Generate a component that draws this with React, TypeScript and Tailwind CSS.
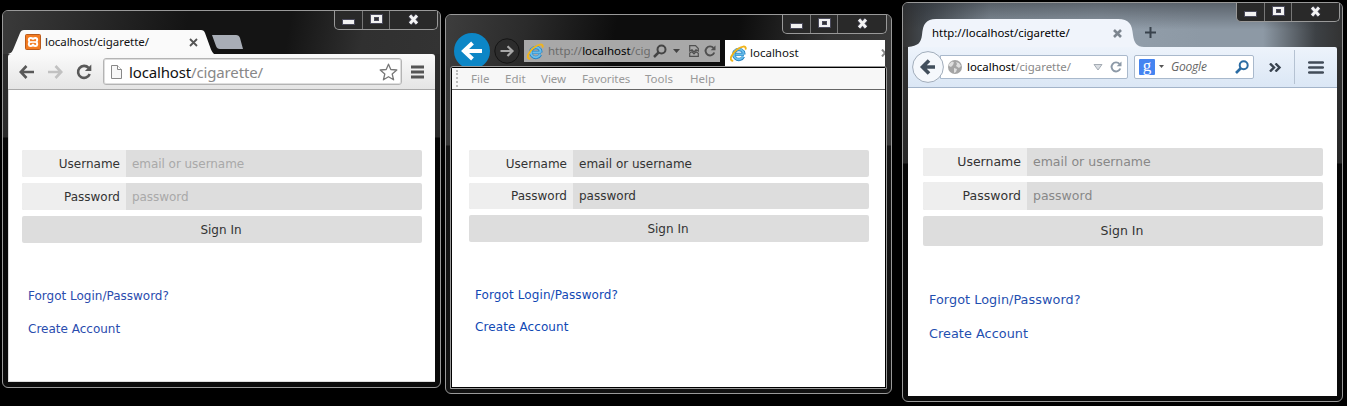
import React from "react";

type FormProps = {
  className: string;
  rowHeights: [string, string, string];
  placeholder: string;
  text: string;
  labelText: string;
  links: string;
  linkText: string;
};

function LoginForm({ className, rowHeights, placeholder, text, labelText, links, linkText }: FormProps) {
  const rows = [
    { label: "Username", hint: "email or username", type: "text" },
    { label: "Password", hint: "password", type: "text" },
  ];
  return (
    <form className={`flex flex-col font-['DejaVu_Sans',sans-serif] text-[#333] ${className}`}>
      <div className="flex w-[400px] flex-col gap-[6px]">
        {rows.map((r, i) => (
          <div key={r.label} className={`flex overflow-hidden rounded-[2px] bg-[#ddd] ${rowHeights[i]}`}>
            <label className={`flex w-[104px] items-center justify-end bg-[#eee] pr-[6px] ${labelText}`}>{r.label}</label>
            <input
              type={r.type}
              placeholder={r.hint}
              className={`min-w-0 flex-1 bg-transparent pl-[6px] outline-none ${text} ${placeholder}`}
            />
          </div>
        ))}
        <button type="button" className={`rounded-[2px] bg-[#ddd] pr-[2px] ${rowHeights[2]} ${labelText}`}>
          Sign In
        </button>
      </div>
      <div className={`flex flex-col items-start pl-[6px] ${links}`}>
        <a className={linkText}>Forgot Login/Password?</a>
        <a className={linkText}>Create Account</a>
      </div>
    </form>
  );
}

function CaptionButtons({ className }: { className: string }) {
  return (
    <div className={`absolute flex h-[19px] rounded-b-[5px] border border-t-0 border-[#999] bg-[#292929] ${className}`}>
      <div className="flex w-[28px] items-center justify-center border-r border-[#777]">
        <svg width="13" height="7" viewBox="0 0 13 7" className="mt-[5px]">
          <rect x=".5" y=".5" width="12" height="5" fill="#f2f2f2" stroke="#4b4b5c" />
        </svg>
      </div>
      <div className="flex w-[27px] items-center justify-center border-r border-[#777]">
        <svg width="13" height="11" viewBox="0 0 13 11" className="-mt-px">
          <rect x=".5" y=".5" width="12" height="9" fill="#f2f2f2" stroke="#4b4b5c" />
          <rect x="4.5" y="3.5" width="4" height="3" fill="#333" stroke="#4b4b5c" />
        </svg>
      </div>
      <div className="flex flex-1 items-center justify-center">
        <svg width="13" height="11" viewBox="0 0 13 11" className="-mt-px">
          <path d="M3 1.5 10 9.5M10 1.5 3 9.5" stroke="#50505f" strokeWidth="4.4" />
          <path d="M3 1.5 10 9.5M10 1.5 3 9.5" stroke="#f4f4f4" strokeWidth="2.8" />
        </svg>
      </div>
    </div>
  );
}

function PageIcon() {
  return (
    <svg width="13" height="16" viewBox="0 0 13 16" className="shrink-0">
      <path d="M1.500 1.500h6l4 4v9h-10z" fill="#f7f7f7" stroke="#888" />
      <path d="M7.500 1.500v4h4" fill="#fff" stroke="#888" />
    </svg>
  );
}

function ReloadIcon({ size, color, className = "" }: { size: number; color: string; className?: string }) {
  return (
    <svg width={size} height={size} viewBox="0 0 16 16" className={`shrink-0 ${className}`}>
      <path d="M12.6 3.9A6 6 0 1 0 13.7 10" fill="none" stroke={color} strokeWidth="2.6" />
      <path d="M15.3 0.6V7H8.9z" fill={color} />
    </svg>
  );
}

function IeLogo() {
  return (
    <svg width="17" height="17" viewBox="0 0 17 17" className="shrink-0">
      <path d="M14 9.4H5.4M13.4 11.6A5 5 0 1 1 13.8 8.8v.600" fill="none" stroke="#2583c3" strokeWidth="3.4" />
      <path d="M13.8 9.4H5.4M13.2 11.600A5 5 0 1 1 13.8 8.8" fill="none" stroke="#69bdeb" strokeWidth="2" />
      <path d="M2.4 15.8C-1.2 15 1.7 8.8 7 4.6 11.6 1 16.2.4 15.7 3.8" fill="none" stroke="#f0b41c" strokeWidth="1.9" strokeLinecap="round" />
    </svg>
  );
}

function XamppIcon() {
  return (
    <svg width="16" height="16" viewBox="0 0 16 16" className="shrink-0">
      <rect x=".5" y=".5" width="15" height="15" rx="1" fill="#f37b21" stroke="#b95b1c" />
      <path
        d="M8 5.500C7.500 3.300 3.800 3.300 3.800 5.900c0 1 .500 1.600 1.200 2.100-1.900 1-1.600 4.100.600 4.100C7.200 12.100 8 11 8 9.800c0 1.200.800 2.300 2.400 2.300 2.200 0 2.500-3.100.600-4.100.700-.500 1.200-1.100 1.200-2.100C12.200 3.300 8.500 3.300 8 5.500z"
        fill="none"
        stroke="#fff"
        strokeWidth="2"
      />
      <path d="M6 8h4" stroke="#fff" strokeWidth="1.600" />
    </svg>
  );
}

function ChromeWindow() {
  return (
    <section className="absolute left-[2px] top-[10px] flex h-[378px] w-[439px] flex-col rounded-[6px] border border-[#999] bg-[linear-gradient(180deg,#303030_0px,#292929_126px,#050505_127px,#0b0b0b_100%)] px-[5px] pb-[5px]">
      <CaptionButtons className="right-[2px] top-0 w-[104px]" />
      <header className="-mx-[5px] flex h-[43px] items-end rounded-t-[5px] bg-[linear-gradient(100deg,#3a3a3a_0%,#272727_22%,#141414_42%,#141414_65%,#303030_82%,#333_100%)] pl-[5px]">
        <div className="relative flex h-[24px] w-[206px] items-center pl-[17px]">
          <svg width="206" height="24" viewBox="0 0 206 24" className="absolute left-0 top-0">
            <path d="M0 24C4 23 4.500 21 6 17.500L12 3Q13 0 16 0H193Q196 0 197 3L203 19.500Q204.500 23 206 24z" fill="#fafafa" />
          </svg>
          <div className="relative flex w-full items-center">
            <XamppIcon />
            <span className="ml-[4px] w-[144px] whitespace-nowrap font-['Noto_Sans',sans-serif] text-[11.5px] leading-[16px] tracking-[-0.05px] text-[#111]">
              localhost/cigarette/
            </span>
            <svg width="9" height="9" viewBox="0 0 9 9" className="mt-px">
              <path d="M1 1l7 7M8 1 1 8" stroke="#555" strokeWidth="1.8" />
            </svg>
          </div>
        </div>
        <svg width="32" height="14" viewBox="0 0 32 14" className="mb-[5px] ml-[-3px]">
          <path d="M1 0H25Q28 0 29 3L32 14H9Q6 14 5 11z" fill="#a8adb6" />
        </svg>
      </header>
      <div className="flex h-[36px] items-center rounded-t-[3px] border-b border-[#aaa] bg-gradient-to-b from-[#fafafa] to-[#e5e5e5] pl-[11px]">
        <svg width="15" height="14" viewBox="0 0 15 14">
          <path d="M7.500 1 1.800 7l5.700 6M2 7h13" fill="none" stroke="#595959" strokeWidth="2.600" />
        </svg>
        <svg width="15" height="14" viewBox="0 0 15 14" className="ml-[14px]">
          <path d="M7.500 1l5.700 6-5.700 6M13 7H0" fill="none" stroke="#c1c1c1" strokeWidth="2.600" />
        </svg>
        <ReloadIcon size={16} color="#595959" className="ml-[13px]" />
        <div className="ml-[11px] flex h-[27px] w-[299px] items-center rounded-[3px] border border-[#b4b4b4] bg-white pl-[6px] shadow-[inset_0_0_0_1px_#dedede]">
          <PageIcon />
          <span className="ml-[6px] flex-1 whitespace-nowrap font-['Noto_Sans',sans-serif] text-[15px] leading-[20px] tracking-[-0.15px] text-[#111]">
            localhost<span className="text-[#888]">/cigarette/</span>
          </span>
          <svg width="19" height="18" viewBox="0 0 19 18" className="mr-[3px]">
            <path d="M9.500 1.200 11.800 6.500 17.800 7 13.200 11 14.600 16.800 9.500 13.700 4.400 16.800 5.800 11 1.200 7 7.200 6.500z" fill="#fff" stroke="#777" strokeWidth="1.300" strokeLinejoin="round" />
          </svg>
        </div>
        <svg width="13" height="14" viewBox="0 0 13 14" className="ml-[9px]">
          <path d="M0 2h13M0 7h13M0 12h13" stroke="#555" strokeWidth="2.800" />
        </svg>
      </div>
      <main className="flex-1 border-b border-l border-[#ddd] bg-white">
        <LoginForm
          className="pl-[13px] pt-[60px]"
          rowHeights={["h-[27px]", "h-[27px]", "h-[27px]"]}
          placeholder="placeholder:text-[#a9a9a9]"
          text="text-[12px] tracking-[-0.05px]"
          labelText="text-[12px]"
          links="gap-[17px] pt-[45px] text-[#2a4cae]"
          linkText="text-[12px] leading-[16px]"
        />
      </main>
    </section>
  );
}

function IeWindow() {
  return (
    <section className="absolute left-[445px] top-[14px] flex h-[380px] w-[447px] flex-col rounded-[6px] border border-[#999] bg-[linear-gradient(180deg,#3a3a3a_0px,#383838_130px,#151515_131px,#111_100%)] px-[4px] pb-[4px]">
      <CaptionButtons className="right-[4px] top-0 w-[105px]" />
      <header className="-mx-[4px] flex h-[51px] items-start overflow-hidden rounded-t-[5px] bg-[linear-gradient(100deg,#3d3d3d_0%,#2b2b2b_18%,#0d0d0d_38%,#0d0d0d_65%,#333_85%,#3a3a3a_100%)] pl-[8px]">
        <svg width="37" height="37" viewBox="0 0 37 37" className="mt-[18px]">
          <circle cx="18" cy="18" r="18" fill="#0c86c6" />
          <path d="M18.500 10 10 18l8.500 8M10.500 18H28" fill="none" stroke="#fff" strokeWidth="4" />
        </svg>
        <svg width="27" height="27" viewBox="0 0 27 27" className="ml-[2px] mt-[23px]">
          <circle cx="14" cy="13" r="12.200" fill="#2c2c2c" stroke="#151515" />
          <path d="M14.500 8.200 19.500 13l-5 5M19 13H7.500" fill="none" stroke="#a8a8a8" strokeWidth="2.200" />
        </svg>
        <div className="ml-[4px] mt-[25px] flex h-[22px] w-[196px] items-center bg-[#a8a8a8] pl-[3px]">
          <IeLogo />
          <span className="ml-[4px] w-[102px] overflow-hidden whitespace-nowrap font-['Noto_Sans',sans-serif] text-[11.500px] leading-[16px] text-[#6b6b6b]">
            http://<span className="text-black">localhost</span>/cig
          </span>
          <svg width="15" height="15" viewBox="0 0 15 15" className="ml-[3px]">
            <circle cx="8.500" cy="5.500" r="4" fill="none" stroke="#444" strokeWidth="2" />
            <path d="M5.500 8.500 1 13" stroke="#444" strokeWidth="2.500" />
          </svg>
          <svg width="7" height="4" viewBox="0 0 7 4" className="ml-[5px]">
            <path d="M0 0h7L3.500 4z" fill="#444" />
          </svg>
          <svg width="10" height="12" viewBox="0 0 10 12" className="ml-[9px]">
            <path d="M.700 6V.700H6.500l2.800 2.800V6L7 4.800 5 6.800 3 4.800zM.700 8 3 6.800l2 2 2-2 2.300 1.500v3H.700z" fill="none" stroke="#505050" strokeWidth="1.200" />
          </svg>
          <ReloadIcon size={12} color="#505050" className="ml-[5px]" />
        </div>
        <div className="ml-[5px] mt-[25px] flex h-[26px] w-[160px] items-center overflow-hidden bg-white pl-[5px]">
          <IeLogo />
          <span className="ml-[3px] w-[131px] shrink-0 whitespace-nowrap font-['Noto_Sans',sans-serif] text-[11.500px] leading-[16px] text-[#111]">localhost</span>
          <svg width="8" height="8" viewBox="0 0 8 8" className="shrink-0">
            <path d="M1 .500l6 7M7 .500l-6 7" stroke="#888" strokeWidth="2" />
          </svg>
        </div>
      </header>
      <div className="flex flex-1 flex-col rounded-t-[3px] border border-[#999] bg-black p-px">
        <nav className="flex h-[22px] shrink-0 items-center border-b border-[#666] bg-[#f7f7f7] pl-[4px] font-['Noto_Sans',sans-serif] text-[11.500px] text-[#999]">
          <div className="mr-[13px] h-[17px] border-l-2 border-dotted border-[#bbb]" />
          <span className="w-[34px]">File</span>
          <span className="w-[36px]">Edit</span>
          <span className="w-[41px]">View</span>
          <span className="w-[63px] tracking-[-0.1px]">Favorites</span>
          <span className="w-[45px]">Tools</span>
          <span>Help</span>
        </nav>
        <main className="flex-1 bg-white">
          <LoginForm
            className="pl-[17px] pt-[60px]"
            rowHeights={["h-[27px]", "h-[26px]", "h-[27px]"]}
            placeholder="placeholder:text-[#333]"
            text="text-[12px]"
            labelText="text-[12px]"
            links="gap-[16px] pt-[45px] text-[#1148b4]"
            linkText="text-[12px] leading-[16px] tracking-[0.1px]"
          />
        </main>
      </div>
    </section>
  );
}

function FirefoxWindow() {
  return (
    <section className="absolute left-[902px] top-[2px] flex h-[400px] w-[441px] flex-col rounded-[6px] border border-[#999] bg-[linear-gradient(180deg,#333_0px,#282828_160px,#070707_161px,#0b0b0b_100%)] px-[5px] pb-[5px]">
      <CaptionButtons className="right-[2px] top-0 w-[104px]" />
      <header className="-mx-[5px] flex h-[44px] items-end rounded-t-[5px] bg-[linear-gradient(180deg,rgba(40,44,50,0.5)_0%,rgba(40,44,50,0)_60%),linear-gradient(90deg,#333_0%,#444a50_5%,#88949f_20%,#939fab_45%,#8d99a5_68%,#8d99a5_82%,#3d4145_94%,#333_100%)] pl-[5px]">
        <div className="relative flex h-[28px] w-[236px] items-center pl-[24px]">
          <svg width="236" height="28" viewBox="0 0 236 28" className="absolute left-0 top-0">
            <path d="M0 28C10 27 13 24 14 16 15 5 18 0 28 0H210C221 0 224 5 225 16 226 24 229 28 236 28z" fill="#f0f4fb" />
          </svg>
          <span className="relative w-[181px] whitespace-nowrap font-['Noto_Sans',sans-serif] text-[11.400px] leading-[16px] text-black">
            http://localhost/cigarette/
          </span>
          <svg width="9" height="9" viewBox="0 0 9 9" className="relative">
            <path d="M1 1l7 7M8 1 1 8" stroke="#7c858f" strokeWidth="2.600" />
          </svg>
        </div>
        <svg width="11" height="11" viewBox="0 0 11 11" className="mb-[9px] ml-[1px]">
          <path d="M5.500 0v11M0 5.500h11" stroke="#39424c" strokeWidth="2" />
        </svg>
      </header>
      <div className="flex h-[41px] shrink-0 items-center rounded-tr-[2px] border-b border-[#a3b4c9] bg-gradient-to-b from-[#edf3fb] to-[#dbe7f5] pl-[4px]">
        <svg width="32" height="32" viewBox="0 0 32 32" className="relative shrink-0">
          <circle cx="16" cy="16" r="15.400" fill="#f5f8fc" stroke="#a0acba" />
          <path d="M17 9.500 10.500 16l6.500 6.500M11 16h12" fill="none" stroke="#424f5c" strokeWidth="3.600" />
        </svg>
        <div className="-ml-[4px] flex h-[24px] w-[188px] items-center rounded-r-[2px] border border-[#a9b9cc] bg-white pl-[7px]">
          <svg width="14" height="14" viewBox="0 0 14 14" className="shrink-0">
            <circle cx="7" cy="7" r="7" fill="#a4a4a4" />
            <path d="M1 4 4 1.500l2 1-1 2.500L3 7 1 6zM8 2l3 1 2 3-2 2-3-2 1-2zM6 8l3 1-1 3-2 1z" fill="#dedede" />
          </svg>
          <span className="ml-[5px] w-[126px] whitespace-nowrap font-['Noto_Sans',sans-serif] text-[11.400px] leading-[16px] text-black">
            localhost<span className="text-[#888]">/cigarette/</span>
          </span>
          <svg width="10" height="7" viewBox="0 0 10 7" className="shrink-0">
            <path d="M1 .500h8L5 6z" fill="#d9dde2" stroke="#a5acb4" />
          </svg>
          <ReloadIcon size={12} color="#8c99a7" className="ml-[7px]" />
        </div>
        <div className="ml-[6px] flex h-[24px] w-[120px] shrink-0 items-center rounded-[2px] border border-[#a9b9cc] bg-white pl-[4px]">
          <span className="flex h-[16px] w-[16px] shrink-0 items-center justify-center rounded-[1px] bg-[#4584f1] pb-[3px] font-['Liberation_Serif',serif] text-[17px] leading-[13px] text-white">
            g
          </span>
          <svg width="5" height="4" viewBox="0 0 5 4" className="ml-[4px]">
            <path d="M0 0h5L2.500 3z" fill="#555" />
          </svg>
          <span className="ml-[7px] w-[64px] font-['Open_Sans',sans-serif] text-[12px] italic leading-[16px] tracking-[-0.200px] text-[#666]">Google</span>
          <svg width="14" height="14" viewBox="0 0 14 14" className="shrink-0">
            <circle cx="8.700" cy="5.200" r="4" fill="none" stroke="#2b6ca3" strokeWidth="2" />
            <path d="M6 8 1 13" stroke="#2b6ca3" strokeWidth="2.600" />
          </svg>
        </div>
        <svg width="13" height="9" viewBox="0 0 13 9" className="ml-[15px] shrink-0">
          <path d="M1 .500 5 4.500l-4 4M6.500 .500l4 4-4 4" fill="none" stroke="#39434f" strokeWidth="2.400" />
        </svg>
        <div className="ml-[12px] h-[34px] w-px bg-[#b5c2d2]" />
        <svg width="16" height="13" viewBox="0 0 16 13" className="ml-[13px] shrink-0">
          <path d="M1.200 1.500h13.600M1.200 6.500h13.600M1.200 11.500h13.600" stroke="#424c58" strokeWidth="2.600" strokeLinecap="round" />
        </svg>
      </div>
      <main className="flex-1 bg-white">
        <LoginForm
          className="pl-[15px] pt-[60px]"
          rowHeights={["h-[28px]", "h-[28px]", "h-[30px]"]}
          placeholder="placeholder:text-[#888]"
          text="text-[12.500px] pt-px"
          labelText="text-[12.500px] pt-px"
          links="gap-[18px] pt-[46px] text-[#1f4fb0]"
          linkText="text-[12.800px] leading-[16px] tracking-[0.06px]"
        />
      </main>
    </section>
  );
}

export default function App() {
  return (
    <div className="relative h-[406px] w-[1347px] overflow-hidden bg-black">
      <ChromeWindow />
      <IeWindow />
      <FirefoxWindow />
    </div>
  );
}
